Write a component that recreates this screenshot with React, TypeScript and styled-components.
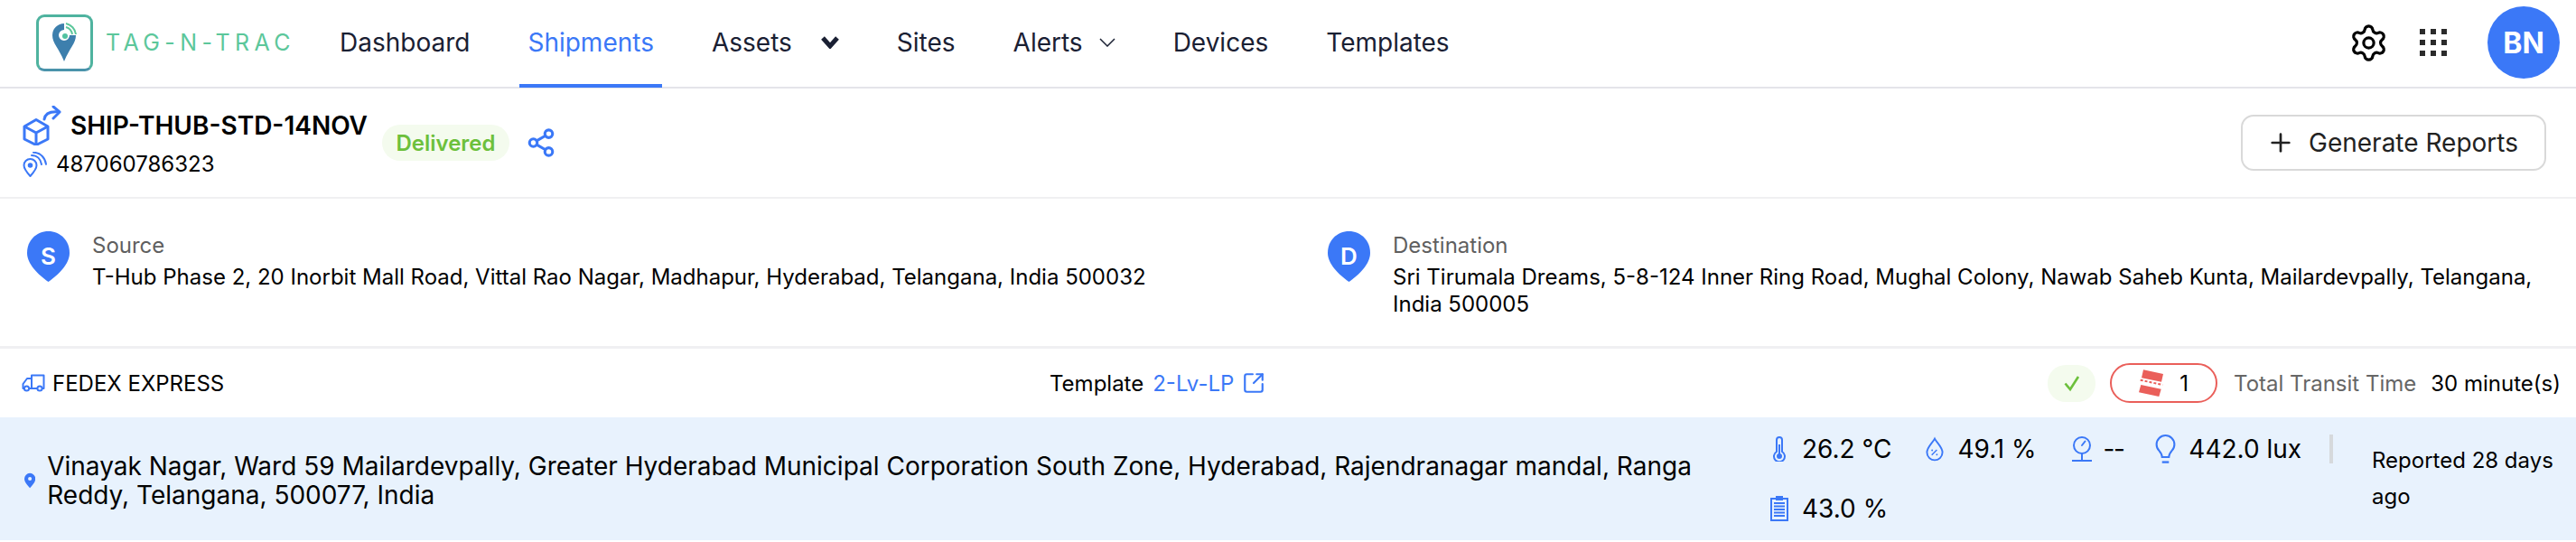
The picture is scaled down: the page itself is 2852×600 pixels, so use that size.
import React from 'react';
import styled, { createGlobalStyle } from 'styled-components';
import { Plus, Settings, Share2, SquareArrowOutUpRight } from 'lucide-react';

const BLUE = '#3b78f7';

const GlobalStyle = createGlobalStyle`
  * { box-sizing: border-box; }
  html, body { margin: 0; background: #fff; }
  body { font-family: Inter, "Noto Sans", sans-serif; color: #000; }
`;

const Page = styled.div`
  width: 2852px;
  height: 600px;
  overflow: hidden;
`;

const Header = styled.header`
  height: 98px;
  display: flex;
  align-items: center;
  padding: 0 18px 2px 40px;
  border-bottom: 2px solid #e4e4ea;
`;

const Logo = styled.div`
  width: 296px;
  display: flex;
  align-items: center;
  gap: 14px;
  flex-shrink: 0;
`;

const LogoBox = styled.div`
  width: 63px;
  height: 63px;
  border: 3px solid #4fb39f;
  border-bottom-color: #4a93ab;
  border-radius: 9px;
  display: flex;
  align-items: center;
  justify-content: center;
`;

const LogoText = styled.span`
  font-size: 25px;
  font-weight: 400;
  color: #5cc79b;
  letter-spacing: 5.4px;
  white-space: nowrap;
`;

const Nav = styled.nav`
  display: flex;
  gap: 46px;
  margin-left: 31px;
  height: 96px;
`;

const NavItem = styled.a<{ $active?: boolean }>`
  display: flex;
  align-items: center;
  padding: 2px 9px 0;
  font-size: 28px;
  color: ${p => (p.$active ? BLUE : '#1a2033')};
  border-bottom: 4px solid ${p => (p.$active ? BLUE : 'transparent')};
  margin-bottom: -2px;
  white-space: nowrap;
`;

const NavLabel = styled.span`
  display: flex;
  align-items: center;
`;

const BoldChevron = styled.svg`
  width: 20px;
  height: 14px;
  margin-left: 32px;
  fill: none;
  stroke: #1a2033;
  stroke-width: 5;
`;

const ThinChevron = styled.svg`
  width: 18px;
  height: 10px;
  margin-left: 18px;
  fill: none;
  stroke: #1a2033;
  stroke-width: 1.5;
`;

const HeaderRight = styled.div`
  margin-left: auto;
  display: flex;
  align-items: center;
`;

const AppsGrid = styled.div`
  display: grid;
  grid-template-columns: repeat(3, 6px);
  gap: 6px;
  margin: 0 45px 0 34px;
`;

const AppsDot = styled.span`
  width: 6px;
  height: 6px;
  background: #2b2b2b;
`;

const Avatar = styled.div`
  width: 80px;
  height: 80px;
  border-radius: 50%;
  background: ${BLUE};
  color: #fff;
  font-size: 32px;
  font-weight: 700;
  display: flex;
  align-items: center;
  justify-content: center;
`;

const ShipmentRow = styled.section`
  height: 122px;
  display: flex;
  align-items: center;
  padding: 0 33px 0 25px;
  border-bottom: 2px solid #f0f0f2;
`;

const ShipmentInfo = styled.div`
  width: 398px;
  display: flex;
  flex-direction: column;
  gap: 9px;
  padding-bottom: 3px;
`;

const TitleLine = styled.div`
  display: flex;
  align-items: center;
  gap: 9px;
`;

const Title = styled.span`
  font-size: 28px;
  font-weight: 600;
  white-space: nowrap;
`;

const IdLine = styled.div`
  display: flex;
  align-items: center;
  gap: 9px;
  font-size: 24px;
  margin-top: -3px;
`;

const StatusPill = styled.span`
  height: 40px;
  width: 141px;
  display: flex;
  align-items: center;
  justify-content: center;
  border-radius: 20px;
  background: #f4fbee;
  color: #6cc03c;
  font-size: 24px;
  font-weight: 600;
`;

const ShareButton = styled.span`
  display: flex;
  margin-left: 18px;
  color: ${BLUE};
`;

const ReportButton = styled.button`
  margin-left: auto;
  width: 338px;
  height: 62px;
  padding: 0 3px 0 0;
  border: 2px solid #d9d9d9;
  border-radius: 14px;
  background: #fff;
  color: #222;
  font-family: inherit;
  font-size: 28px;
  display: flex;
  align-items: center;
  justify-content: center;
  gap: 15px;
`;

const RouteRow = styled.section`
  height: 166px;
  display: grid;
  grid-template-columns: 1440px 1fr;
  padding: 36px 30px 0;
  border-bottom: 3px solid #f0f0f2;
`;

const RouteStop = styled.div`
  display: flex;
  gap: 25px;
`;

const PinWrap = styled.div`
  position: relative;
  width: 47px;
  height: 56px;
  flex-shrink: 0;
  display: flex;
  justify-content: center;
`;

const PinLetter = styled.span`
  position: absolute;
  top: 12px;
  left: 0;
  right: 0;
  text-align: center;
  color: #fff;
  font-size: 26px;
  font-weight: 600;
`;

const StopLabel = styled.div`
  font-size: 24px;
  line-height: 30px;
  margin-top: 1px;
  color: #5f5f5f;
`;

const StopAddress = styled.div`
  font-size: 24px;
  line-height: 30px;
  margin-top: 5px;
  max-width: 1265px;
`;

const CarrierRow = styled.section`
  height: 76px;
  display: grid;
  grid-template-columns: 1138px auto 1fr;
  align-items: center;
  padding: 0 17px 0 24px;
  font-size: 24px;
`;

const Carrier = styled.div`
  display: flex;
  align-items: center;
  gap: 8px;
`;

const TemplateInfo = styled.div`
  display: flex;
  align-items: center;
  gap: 10px;
`;

const TemplateLink = styled.a`
  display: flex;
  align-items: center;
  gap: 9px;
  color: ${BLUE};
`;

const TransitInfo = styled.div`
  display: flex;
  justify-content: flex-end;
  align-items: center;
`;

const CheckBadge = styled.span`
  width: 53px;
  height: 41px;
  border-radius: 20px;
  background: #f4fbee;
  display: flex;
  align-items: center;
  justify-content: center;
`;

const AlertPill = styled.span`
  width: 119px;
  height: 44px;
  margin-left: 16px;
  border: 2px solid #ea5f5a;
  border-radius: 22px;
  display: flex;
  align-items: center;
  justify-content: center;
  gap: 18px;
`;

const TransitLabel = styled.span`
  margin-left: 18px;
  color: #666;
`;

const TransitValue = styled.span`
  margin-left: 16px;
`;

const ReportRow = styled.section`
  height: 136px;
  background: #e8f2fd;
  display: grid;
  grid-template-columns: 1960px 619px 1fr;
`;

const LocationBlock = styled.div`
  display: flex;
  align-items: center;
  gap: 13px;
  padding: 0 68px 11px 27px;
  font-size: 28px;
  line-height: 32px;
`;

const SensorList = styled.div`
  display: flex;
  flex-wrap: wrap;
  align-content: flex-start;
  column-gap: 38px;
  padding-top: 18px;
`;

const Sensor = styled.div<{ $gap?: number }>`
  height: 34px;
  margin-bottom: 32px;
  display: flex;
  align-items: center;
  gap: ${p => p.$gap ?? 15}px;
  font-size: 28px;
  white-space: nowrap;
`;

const EmptyValue = styled.span`
  letter-spacing: -1.5px;
  margin-right: -3px;
`;

const SensorBreak = styled.div`
  flex-basis: 100%;
`;

const ReportedBlock = styled.div`
  padding: 28px 24px 0 47px;
  font-size: 24px;
  line-height: 40px;
  position: relative;
  &::before {
    content: '';
    position: absolute;
    left: 0;
    top: 19px;
    width: 4px;
    height: 32px;
    background: #d6d9dc;
  }
`;

const BoxIcon = () => (
  <svg width="44" height="44" viewBox="0 0 44 44" fill="none" stroke={BLUE} strokeWidth="3" strokeLinejoin="round">
    <path d="M15 15.500 28 23v14l-13 6.500L2 37V23z" />
    <path d="M2 23l13 7 13-7M15 30v13" />
    <path d="M24 15c1-6 6-9 16-8" strokeLinecap="round" />
    <path d="M34 1l7 6-7 7" strokeLinecap="round" />
  </svg>
);

const TagIcon = () => (
  <svg width="28" height="28" viewBox="0 0 28 28" fill="none" stroke={BLUE} strokeWidth="2">
    <path d="M8.500 27C4 22 1.500 18.500 1.500 15a7 7 0 0 1 14 0c0 3.500-2.500 7-7 12z" />
    <circle cx="8.500" cy="15" r="1.800" fill={BLUE} />
    <path d="M10 4c6 0 10 4 11 10M12 0.800c8 0 13 6 14 13" strokeLinecap="round" />
  </svg>
);

const LogoPin = () => (
  <svg width="28" height="44" viewBox="0 0 28 44">
    <path d="M13 1A13 13 0 0 0 0 14c0 9 7 14 13 29 6-15 13-20 13-29h-7a6 6 0 1 1-6-6z" fill="#3d7fad" />
    <circle cx="14" cy="15" r="3" fill="#52c2a0" />
    <path d="M15 5a10 10 0 0 1 7 8M15 1a14 14 0 0 1 11 12" fill="none" stroke="#5cc79b" strokeWidth="2" />
  </svg>
);

const StopPin = () => (
  <svg width="47" height="56" viewBox="0 0 47 56">
    <path d="M23.500 0C10.500 0 0 10 0 24c0 12 12 24 23.500 32C35 48 47 36 47 24 47 10 36.500 0 23.500 0z" fill={BLUE} />
  </svg>
);

const TruckIcon = () => (
  <svg width="26" height="20" viewBox="0 0 26 20" fill="none" stroke={BLUE} strokeWidth="2" strokeLinejoin="round">
    <path d="M11 16V1.500h13.500V16h-2M11 5H6l-4.500 6v5h1.200M8 16h9" />
    <circle cx="5.500" cy="16" r="2.600" />
    <circle cx="20" cy="16" r="2.600" />
  </svg>
);

const CheckIcon = () => (
  <svg width="20" height="20" viewBox="0 0 20 20" fill="none" stroke="#6cc03c" strokeWidth="2.600">
    <path d="M2.500 10.500 8 17 17 3" />
  </svg>
);

const RibbonIcon = () => (
  <svg width="27" height="30" viewBox="11 9 27 30">
    <path d="M16 9.300 38 14l-2 8.700-22-4.400zM13.300 26l22.400 4.700L33.300 39 11 34.300z" fill="#ea5f5a" />
    <path d="M12.700 20.700 37.300 26" stroke="#ea5f5a" strokeWidth="2" strokeDasharray="3 2" fill="none" />
  </svg>
);

const LocationDot = () => (
  <svg width="15" height="20" viewBox="0 0 15 20">
    <path d="M7.500 0A7.500 7.500 0 0 0 0 7.500C0 12 4 16 7.500 20 11 16 15 12 15 7.500A7.500 7.500 0 0 0 7.500 0z" fill={BLUE} />
    <circle cx="7.500" cy="7.500" r="2.500" fill="#e8f2fd" />
  </svg>
);

const ThermoIcon = () => (
  <svg width="20" height="28" viewBox="0 0 20 28" fill="none" stroke={BLUE} strokeWidth="2">
    <path d="M7 17V4a3 3 0 0 1 6 0v13a6 6 0 1 1-6 0z" />
    <circle cx="10" cy="22" r="2" fill={BLUE} />
    <path d="M10 20V9" />
  </svg>
);

const DropIcon = () => (
  <svg width="20" height="28" viewBox="0 0 21 28" fill="none" stroke={BLUE} strokeWidth="2">
    <path d="M10.500 2C8 7 1.500 12 1.500 18a9 9 0 0 0 18 0C19.500 12 13 7 10.500 2z" />
    <path d="M7 21l6-6" strokeWidth="1.500" />
    <circle cx="7.500" cy="15.500" r="1" fill={BLUE} stroke="none" />
    <circle cx="13" cy="20.500" r="1" fill={BLUE} stroke="none" />
  </svg>
);

const GaugeIcon = () => (
  <svg width="24" height="28" viewBox="0 0 24 28" fill="none" stroke={BLUE} strokeWidth="2">
    <circle cx="12" cy="10" r="9" />
    <path d="M12 10l3.500-4.500" strokeLinecap="round" />
    <path d="M12 19v7M1 27h22" />
  </svg>
);

const BulbIcon = () => (
  <svg width="23" height="32" viewBox="0 -2.500 24 34" fill="none" stroke={BLUE} strokeWidth="2.200">
    <path d="M8 24c0-3-1-4.500-3.500-7.500A10.500 10.500 0 1 1 19.500 16.500C17 19.500 16 21 16 24z" />
    <path d="M8 30h8" strokeWidth="2.500" />
  </svg>
);

const ClipboardIcon = () => (
  <svg width="20" height="28" viewBox="0 0 20 28" fill="none" stroke={BLUE} strokeWidth="2">
    <path d="M1 3h18v24H1z" />
    <path d="M7 1h6v3H7z" fill={BLUE} />
    <path d="M4 8h12M4 11.500h12M4 15h12M4 18.500h12M4 22h12" />
  </svg>
);

const navItems = ['Dashboard', 'Shipments', 'Assets', 'Sites', 'Alerts', 'Devices', 'Templates'];

export default function App() {
  return (
    <Page>
      <GlobalStyle />
      <Header>
        <Logo>
          <LogoBox><LogoPin /></LogoBox>
          <LogoText>TAG-N-TRAC</LogoText>
        </Logo>
        <Nav>
          {navItems.map(item => (
            <NavItem key={item} $active={item === 'Shipments'}>
              <NavLabel>
                {item}
                {item === 'Assets' && (
                  <BoldChevron viewBox="0 0 20 14"><path d="M2 2l8 9 8-9" /></BoldChevron>
                )}
                {item === 'Alerts' && (
                  <ThinChevron viewBox="0 0 18 10"><path d="M1 1l8 8 8-8" /></ThinChevron>
                )}
              </NavLabel>
            </NavItem>
          ))}
        </Nav>
        <HeaderRight>
          <Settings size={45} strokeWidth={1.7} color="#000" />
          <AppsGrid>
            {Array.from({ length: 9 }, (_, i) => <AppsDot key={i} />)}
          </AppsGrid>
          <Avatar>BN</Avatar>
        </HeaderRight>
      </Header>

      <ShipmentRow>
        <ShipmentInfo>
          <TitleLine>
            <BoxIcon />
            <Title>SHIP-THUB-STD-14NOV</Title>
          </TitleLine>
          <IdLine>
            <TagIcon />
            487060786323
          </IdLine>
        </ShipmentInfo>
        <StatusPill>Delivered</StatusPill>
        <ShareButton><Share2 size={34} strokeWidth={2.2} /></ShareButton>
        <ReportButton>
          <Plus size={32} strokeWidth={2} />
          Generate Reports
        </ReportButton>
      </ShipmentRow>

      <RouteRow>
        <RouteStop>
          <PinWrap><StopPin /><PinLetter>S</PinLetter></PinWrap>
          <div>
            <StopLabel>Source</StopLabel>
            <StopAddress>T-Hub Phase 2, 20 Inorbit Mall Road, Vittal Rao Nagar, Madhapur, Hyderabad, Telangana, India 500032</StopAddress>
          </div>
        </RouteStop>
        <RouteStop>
          <PinWrap><StopPin /><PinLetter>D</PinLetter></PinWrap>
          <div>
            <StopLabel>Destination</StopLabel>
            <StopAddress>Sri Tirumala Dreams, 5-8-124 Inner Ring Road, Mughal Colony, Nawab Saheb Kunta, Mailardevpally, Telangana, India 500005</StopAddress>
          </div>
        </RouteStop>
      </RouteRow>

      <CarrierRow>
        <Carrier><TruckIcon />FEDEX EXPRESS</Carrier>
        <TemplateInfo>
          Template
          <TemplateLink>2-Lv-LP <SquareArrowOutUpRight size={26} strokeWidth={2} /></TemplateLink>
        </TemplateInfo>
        <TransitInfo>
          <CheckBadge><CheckIcon /></CheckBadge>
          <AlertPill><RibbonIcon />1</AlertPill>
          <TransitLabel>Total Transit Time</TransitLabel>
          <TransitValue>30 minute(s)</TransitValue>
        </TransitInfo>
      </CarrierRow>

      <ReportRow>
        <LocationBlock>
          <LocationDot />
          <span>Vinayak Nagar, Ward 59 Mailardevpally, Greater Hyderabad Municipal Corporation South Zone, Hyderabad, Rajendranagar mandal, Ranga Reddy, Telangana, 500077, India</span>
        </LocationBlock>
        <SensorList>
          <Sensor><ThermoIcon />26.2 °C</Sensor>
          <Sensor><DropIcon />49.1 %</Sensor>
          <Sensor $gap={12}><GaugeIcon /><EmptyValue>--</EmptyValue></Sensor>
          <Sensor $gap={14}><BulbIcon />442.0 lux</Sensor>
          <SensorBreak />
          <Sensor><ClipboardIcon />43.0 %</Sensor>
        </SensorList>
        <ReportedBlock>Reported 28 days ago</ReportedBlock>
      </ReportRow>
    </Page>
  );
}
